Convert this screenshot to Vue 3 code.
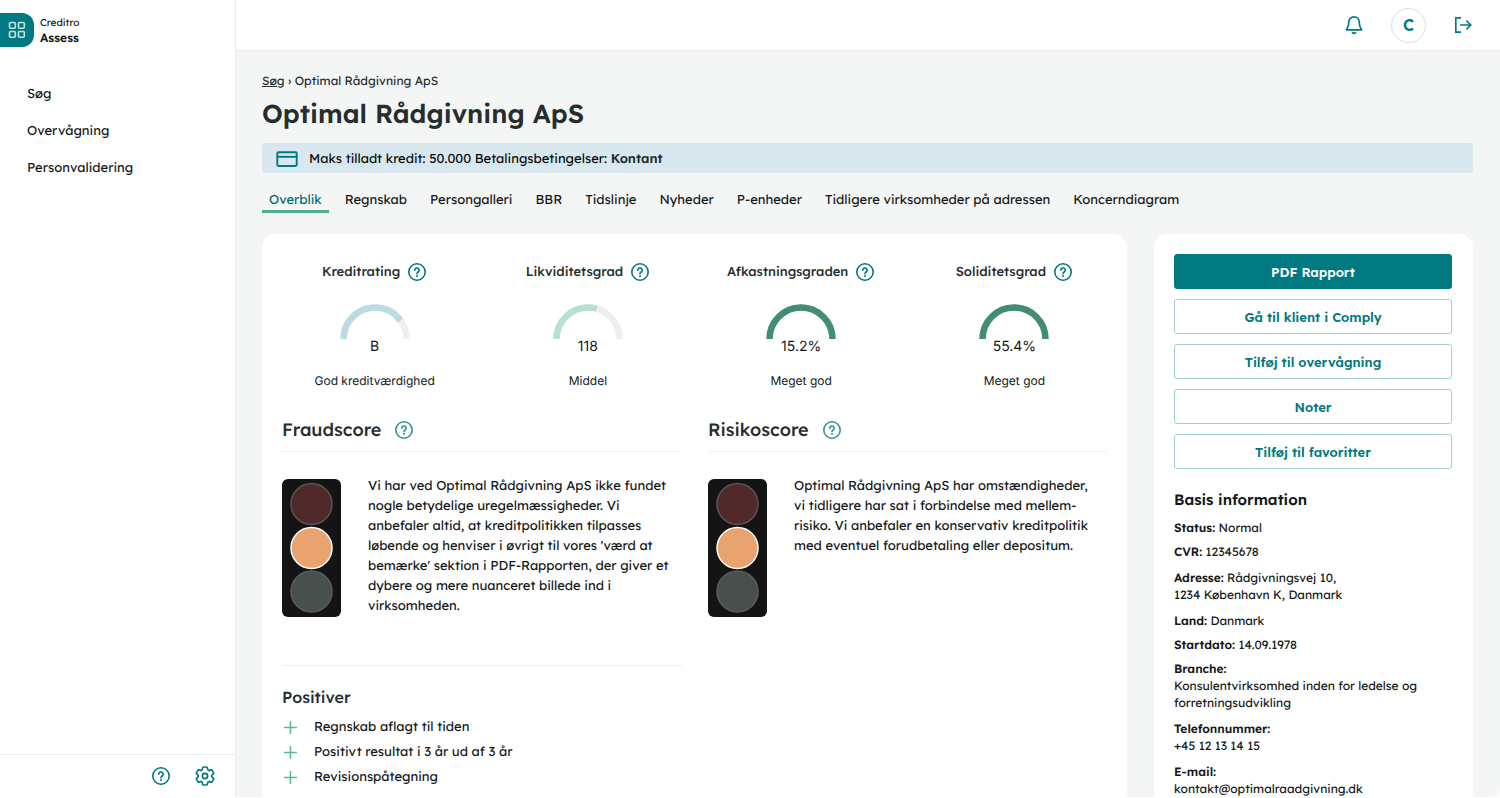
<script setup>
const nav = ['Søg', 'Overvågning', 'Personvalidering']
const tabs = [
  'Overblik', 'Regnskab', 'Persongalleri', 'BBR', 'Tidslinje', 'Nyheder',
  'P-enheder', 'Tidligere virksomheder på adressen', 'Koncerndiagram',
]
const gauges = [
  { name: 'Kreditrating', value: 'B', label: 'God kreditværdighed', share: 80, color: '#bcdae4' },
  { name: 'Likviditetsgrad', value: '118', label: 'Middel', share: 59, color: '#b9dfd2' },
  { name: 'Afkastningsgraden', value: '15.2%', label: 'Meget god', share: 100, color: '#438c77' },
  { name: 'Soliditetsgrad', value: '55.4%', label: 'Meget god', share: 100, color: '#438c77' },
]
const scores = [
  {
    name: 'Fraudscore',
    text: "Vi har ved Optimal Rådgivning ApS ikke fundet nogle betydelige uregelmæssigheder. Vi anbefaler altid, at kreditpolitikken tilpasses løbende og henviser i øvrigt til vores 'værd at bemærke' sektion i PDF-Rapporten, der giver et dybere og mere nuanceret billede ind i virksomheden.",
  },
  {
    name: 'Risikoscore',
    text: 'Optimal Rådgivning ApS har omstændigheder, vi tidligere har sat i forbindelse med mellem-risiko. Vi anbefaler en konservativ kreditpolitik med eventuel forudbetaling eller depositum.',
  },
]
const positives = ['Regnskab aflagt til tiden', 'Positivt resultat i 3 år ud af 3 år', 'Revisionspåtegning']
const actions = ['PDF Rapport', 'Gå til klient i Comply', 'Tilføj til overvågning', 'Noter', 'Tilføj til favoritter']
const facts = [
  { key: 'Status:', lines: ['Normal'], inline: true },
  { key: 'CVR:', lines: ['12345678'], inline: true },
  { key: 'Adresse:', lines: ['Rådgivningsvej 10,', '1234 København K, Danmark'], inline: true, spaced: true },
  { key: 'Land:', lines: ['Danmark'], inline: true, spaced: true },
  { key: 'Startdato:', lines: ['14.09.1978'], inline: true },
  { key: 'Branche:', lines: ['Konsulentvirksomhed inden for ledelse og forretningsudvikling'] },
  { key: 'Telefonnummer:', lines: ['+45 12 13 14 15'], spaced: true },
  { key: 'E-mail:', lines: ['kontakt@optimalraadgivning.dk'], spaced: true },
]
</script>

<template>
  <svg class="defs" aria-hidden="true">
    <symbol id="help" viewBox="0 0 20 20">
      <g fill="none" stroke="currentColor" stroke-width="1.6" stroke-linecap="round" stroke-linejoin="round">
        <circle cx="10" cy="10" r="8.2" />
        <path d="M7.8 8.2a2.2 2.2 0 1 1 3.4 1.8c-.8.5-1.2.9-1.2 1.7" />
      </g>
      <circle cx="10" cy="14" r="1" fill="currentColor" />
    </symbol>
  </svg>
  <div class="app">
    <aside class="sidebar">
      <div class="brand">
        <button class="brand-mark" aria-label="Apps">
          <svg width="18" height="18" viewBox="0 0 18 18" fill="none" stroke="#c5e3e3" stroke-width="1.6">
            <rect x="1.5" y="1.5" width="5.8" height="5.8" rx="1" />
            <rect x="10.5" y="1.5" width="5.8" height="5.8" rx="1" />
            <rect x="1.5" y="10.5" width="5.8" height="5.8" rx="1" />
            <rect x="10.5" y="10.5" width="5.8" height="5.8" rx="1" />
          </svg>
        </button>
        <div class="brand-name"><span>Creditro</span><strong>Assess</strong></div>
      </div>
      <nav class="nav">
        <a v-for="n in nav" :key="n" href="#">{{ n }}</a>
      </nav>
      <div class="side-tools">
        <button class="icon" aria-label="Hjælp"><svg width="20" height="20"><use href="#help" /></svg></button>
        <button class="icon" aria-label="Indstillinger">
          <svg width="20" height="20" viewBox="2 2 20 20" fill="none" stroke="currentColor" stroke-width="1.7" stroke-linejoin="round">
            <path d="M9.594 3.94c.09-.542.56-.94 1.11-.94h2.593c.55 0 1.02.398 1.11.94l.213 1.281c.063.374.313.686.645.87.074.04.147.083.22.127.325.196.72.257 1.075.124l1.217-.456a1.125 1.125 0 0 1 1.37.49l1.296 2.247a1.125 1.125 0 0 1-.26 1.431l-1.003.827c-.293.241-.438.613-.43.992a7.723 7.723 0 0 1 0 .255c-.008.378.137.75.43.991l1.004.827c.424.35.534.955.26 1.43l-1.298 2.247a1.125 1.125 0 0 1-1.369.491l-1.217-.456c-.355-.133-.75-.072-1.076.124a6.47 6.47 0 0 1-.22.128c-.331.183-.581.495-.644.869l-.213 1.281c-.09.543-.56.94-1.11.94h-2.594c-.55 0-1.019-.398-1.11-.94l-.213-1.281c-.062-.374-.312-.686-.644-.87a6.52 6.52 0 0 1-.22-.127c-.325-.196-.72-.257-1.076-.124l-1.217.456a1.125 1.125 0 0 1-1.369-.49l-1.297-2.247a1.125 1.125 0 0 1 .26-1.431l1.004-.827c.292-.24.437-.613.43-.991a6.932 6.932 0 0 1 0-.255c.007-.38-.138-.751-.43-.992l-1.004-.827a1.125 1.125 0 0 1-.26-1.43l1.297-2.247a1.125 1.125 0 0 1 1.37-.491l1.216.456c.356.133.751.072 1.076-.124.072-.044.146-.086.22-.128.332-.183.582-.495.644-.869l.214-1.28Z" />
            <circle cx="12" cy="12" r="2.6" />
          </svg>
        </button>
      </div>
    </aside>

    <div class="content">
      <header class="topbar">
        <button class="icon" aria-label="Notifikationer">
          <svg width="20" height="20" viewBox="0 0 20 20" fill="none" stroke="currentColor" stroke-width="1.7" stroke-linecap="round" stroke-linejoin="round">
            <path d="M4.800 7C4.800 4 7 1.800 10 1.800S15.200 4 15.200 7c0 4 .6 5.200 2.300 7.800h-15C4.200 12.200 4.800 11 4.800 7z" />
            <path d="M8.500 17.600q1.500 1.500 3 0" />
          </svg>
        </button>
        <button class="avatar" aria-label="Profil">C</button>
        <button class="icon" aria-label="Log ud">
          <svg width="20" height="20" viewBox="0 0 20 20" fill="none" stroke="currentColor" stroke-width="1.7">
            <path d="M8 2.8H2.800v14.400H8M7 10h10.500M13.300 5.500l4.400 4.500-4.400 4.500" />
          </svg>
        </button>
      </header>

      <main class="page">
        <div class="crumbs"><a href="#">Søg</a> › Optimal Rådgivning ApS</div>
        <h1>Optimal Rådgivning ApS</h1>
        <div class="notice">
          <svg width="22" height="16" viewBox="0 0 22 16" fill="none" stroke="currentColor" stroke-width="1.9">
            <rect x="1.3" y="1.3" width="19.4" height="13.7" rx="1.2" />
            <path d="M1 5.800h19.500" />
          </svg>
          <span>Maks tilladt kredit: 50.000 Betalingsbetingelser: <strong>Kontant</strong></span>
        </div>
        <nav class="tabs">
          <a v-for="(t, i) in tabs" :key="t" href="#" :class="{ active: i === 0 }">{{ t }}</a>
        </nav>

        <div class="columns">
          <section class="card overview">
            <div class="gauges">
              <div v-for="g in gauges" :key="g.name" class="gauge">
                <div class="gauge-name">
                  <span>{{ g.name }}</span>
                  <button class="icon" :aria-label="'Hjælp til ' + g.name"><svg width="20" height="20"><use href="#help" /></svg></button>
                </div>
                <svg class="dial" width="70" height="35" viewBox="0 0 70 35" fill="none" stroke-width="6.5">
                  <path d="M3.500 35a31.500 31.500 0 0 1 63 0" stroke="#eee" />
                  <path d="M3.500 35a31.500 31.500 0 0 1 63 0" :stroke="g.color" pathLength="100" :stroke-dasharray="g.share + ' 200'" />
                </svg>
                <div class="gauge-value">{{ g.value }}</div>
                <div class="gauge-label">{{ g.label }}</div>
              </div>
            </div>

            <div class="scores">
              <article v-for="s in scores" :key="s.name">
                <div class="score-head">
                  <h2>{{ s.name }}</h2>
                  <button class="icon soft" :aria-label="'Hjælp til ' + s.name"><svg width="20" height="20"><use href="#help" /></svg></button>
                </div>
                <div class="score-body">
                  <svg class="lights" width="59" height="138" viewBox="0 0 59 138">
                    <rect width="59" height="138" rx="6" fill="#141414" />
                    <circle cx="29.5" cy="25" r="20.5" fill="#51292b" stroke="#5a5555" stroke-width="1.5" />
                    <circle cx="29.5" cy="69" r="20.5" fill="#e9a36f" stroke="#fff" stroke-width="1.5" />
                    <circle cx="29.5" cy="112.5" r="20.5" fill="#47504c" stroke="#5c5c5c" stroke-width="1.5" />
                  </svg>
                  <p>{{ s.text }}</p>
                </div>
              </article>
            </div>

            <div class="positives">
              <h3>Positiver</h3>
              <ul>
                <li v-for="p in positives" :key="p">
                  <svg width="15" height="15" viewBox="0 0 15 15" stroke="#5bb599" stroke-width="1.5"><path d="M1 7.500h13M7.500 1v13" /></svg>
                  {{ p }}
                </li>
              </ul>
            </div>
          </section>

          <aside class="card details">
            <div class="actions">
              <button v-for="(a, i) in actions" :key="a" :class="{ primary: i === 0 }">{{ a }}</button>
            </div>
            <h4>Basis information</h4>
            <p v-for="f in facts" :key="f.key" :class="{ spaced: f.spaced }">
              <strong>{{ f.key }}</strong>
              <template v-for="(l, i) in f.lines" :key="l"><br v-if="i > 0 || !f.inline" />{{ ' ' + l }}</template>
            </p>
          </aside>
        </div>
      </main>
    </div>
  </div>
</template>

<style>
body {
  margin: 0;
  background: #fff;
}
</style>

<style scoped>
* {
  box-sizing: border-box;
}
.defs {
  position: absolute;
  width: 0;
  height: 0;
}
.app {
  display: flex;
  height: calc(100vh - 1px);
  font-family: Lexend, Inter, sans-serif;
  font-size: 13px;
  line-height: 20px;
  text-rendering: geometricPrecision;
  color: #141818;
}
h1, h2, h3, h4, p, ul {
  margin: 0;
  padding: 0;
}
a {
  color: inherit;
  text-decoration: none;
}
button {
  font: inherit;
  color: #007a80;
  background: none;
  border: 0;
  padding: 0;
  cursor: pointer;
}
svg {
  display: block;
  flex: none;
}
.soft {
  opacity: 0.8;
}
.sidebar {
  width: 236px;
  flex: none;
  display: flex;
  flex-direction: column;
  border-right: 1px solid #e9eded;
}
.brand {
  display: flex;
  align-items: center;
  gap: 6px;
  padding-top: 13px;
}
.brand-mark {
  width: 34px;
  height: 34px;
  display: flex;
  align-items: center;
  justify-content: center;
  background: #007a80;
  border-radius: 0 12px 12px 0;
}
.brand-name {
  display: flex;
  flex-direction: column;
  font-size: 10px;
  line-height: 15px;
}
.brand-name strong {
  font-size: 12px;
  font-weight: 600;
}
.nav {
  display: flex;
  flex-direction: column;
  gap: 17px;
  padding: 37px 27px;
  flex: 1;
}
.side-tools {
  height: 43px;
  display: flex;
  align-items: center;
  justify-content: flex-end;
  gap: 24px;
  padding-right: 20px;
  border-top: 1px solid #e6f0f2;
}
.content {
  flex: 1;
  min-width: 0;
  display: flex;
  flex-direction: column;
  overflow: hidden;
  background: #f4f6f6;
  border-radius: 0 0 8px 0;
}
.topbar {
  height: 51px;
  flex: none;
  display: flex;
  align-items: center;
  justify-content: flex-end;
  gap: 27px;
  padding-right: 27px;
  background: #fff;
  border-bottom: 1px solid #eceeee;
}
.avatar {
  width: 35px;
  height: 35px;
  border: 1px solid #cfe5e6;
  border-radius: 50%;
  font-size: 16px;
  font-weight: 600;
}
.page {
  flex: 1;
  min-height: 0;
  overflow: auto;
  scrollbar-width: none;
  padding: 20px 27px 0 26px;
}
.crumbs {
  font-size: 12px;
  color: #262d2f;
}
.crumbs a {
  text-decoration: underline;
}
h1 {
  margin-top: 6px;
  font-size: 26px;
  line-height: 34px;
  font-weight: 600;
  color: #262d2f;
}
.notice {
  height: 30px;
  margin-top: 12px;
  padding: 1px 14px 0;
  display: flex;
  align-items: center;
  gap: 11px;
  background: #d8e8ee;
  border-radius: 4px;
  color: #007a80;
}
.notice span {
  color: #080c0c;
}
.notice strong {
  font-weight: 600;
  color: #262d2f;
}
.tabs {
  display: flex;
  gap: 9px;
  margin-top: 14px;
}
.tabs a {
  padding: 3px 7px 0;
  border-bottom: 3px solid transparent;
  white-space: nowrap;
}
.tabs .active {
  color: #006b70;
  border-color: #4fae92;
}
.columns {
  display: grid;
  grid-template-columns: minmax(0, 1fr) 319px;
  gap: 27px;
  margin-top: 21px;
}
.card {
  background: #fff;
  border-radius: 14px 14px 0 0;
  padding: 20px;
}
.gauges {
  display: grid;
  grid-template-columns: repeat(4, 1fr);
  margin: 0 -14px;
  padding-top: 8px;
}
.gauge {
  display: flex;
  flex-direction: column;
  align-items: center;
}
.gauge-name {
  display: flex;
  align-items: center;
  gap: 7px;
  font-weight: 500;
  color: #262d2f;
}
.dial {
  margin-top: 22px;
}
.gauge-value {
  font-family: Inter, sans-serif;
  font-size: 14px;
  line-height: 16px;
}
.gauge-label {
  font-family: Inter, sans-serif;
  font-size: 12px;
  margin-top: 16px;
}
.scores {
  display: grid;
  grid-template-columns: 1fr 1fr;
  gap: 27px;
  margin-top: 24px;
}
.score-head {
  display: flex;
  align-items: center;
  gap: 13px;
  padding-bottom: 6px;
  border-bottom: 1px solid #eef3f7;
}
h2 {
  font-size: 18px;
  line-height: 30px;
  font-weight: 500;
  color: #262d2f;
}
.score-body {
  display: flex;
  gap: 27px;
  padding: 24px 10px 0 0;
  min-height: 164px;
}
.lights {
  margin-top: 3px;
}
.positives {
  width: calc(50% - 13px);
  margin-top: 48px;
  border-top: 1px solid #e8f2f4;
  padding-top: 19px;
}
h3 {
  font-size: 16px;
  line-height: 24px;
  font-weight: 500;
  color: #262d2f;
}
ul {
  list-style: none;
  margin-top: 6px;
}
li {
  display: flex;
  align-items: center;
  gap: 16px;
  line-height: 25px;
}
.positives svg {
  margin-left: 1px;
}
.actions {
  display: flex;
  flex-direction: column;
  gap: 10px;
  padding-right: 1px;
}
.actions button {
  height: 35px;
  border: 1px solid #a2d0d2;
  border-radius: 3px;
  font-weight: 600;
}
.actions .primary {
  background: #007a80;
  color: #fff;
  border-color: #007a80;
}
h4 {
  margin-top: 21px;
  margin-bottom: 9px;
  font-size: 15px;
  line-height: 20px;
  font-weight: 600;
}
.details p {
  margin-top: 7px;
  font-size: 12px;
  line-height: 17px;
}
.details .spaced {
  margin-top: 9px;
}
.details strong {
  font-weight: 600;
}
</style>
